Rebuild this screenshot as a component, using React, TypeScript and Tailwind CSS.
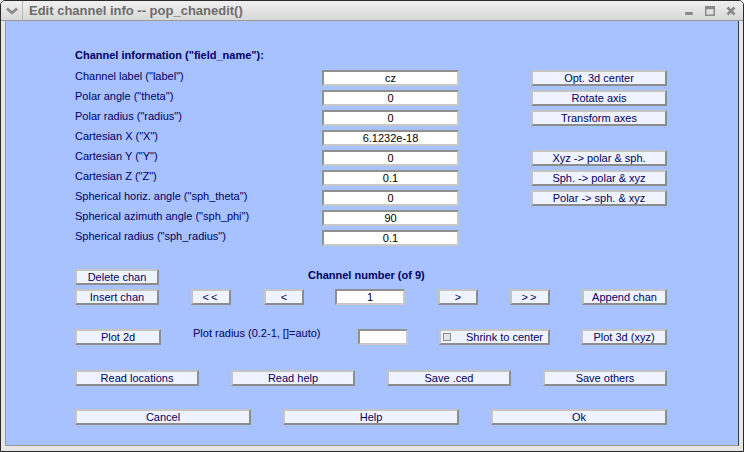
import React from "react";

/* ---------- SHARED STYLES ---------- */
const btn =
  "h-[16px] flex items-center justify-center bg-[#eef3ff] border-2 border-t-[#c4c4c4] border-l-[#c4c4c4] border-b-[#8c8c8c] border-r-[#8c8c8c] text-[11px] leading-none text-[#000066] shrink-0";
const edit =
  "h-[16px] flex items-center justify-center bg-white border-2 border-t-[#909090] border-l-[#909090] border-b-[#c8c8c8] border-r-[#c8c8c8] text-[11px] leading-none text-black shrink-0";

/* ---------- DATA ---------- */
const fields: { label: string; value: string; action?: string }[] = [
  { label: 'Channel label ("label")', value: "cz", action: "Opt. 3d center" },
  { label: 'Polar angle ("theta")', value: "0", action: "Rotate axis" },
  { label: 'Polar radius ("radius")', value: "0", action: "Transform axes" },
  { label: 'Cartesian X ("X")', value: "6.1232e-18" },
  { label: 'Cartesian Y ("Y")', value: "0", action: "Xyz -> polar & sph." },
  { label: 'Cartesian Z ("Z")', value: "0.1", action: "Sph. -> polar & xyz" },
  { label: 'Spherical horiz. angle ("sph_theta")', value: "0", action: "Polar -> sph. & xyz" },
  { label: 'Spherical azimuth angle ("sph_phi")', value: "90" },
  { label: 'Spherical radius ("sph_radius")', value: "0.1" },
];

/* ---------- TITLE BAR ---------- */
function TitleBar() {
  return (
    <div className="h-[20px] flex items-center bg-gradient-to-b from-[#f0f0f0] to-[#d8d8d8] border-b border-[#9a9a9a] rounded-t-[4px] shrink-0">
      <div className="w-[22px] h-full flex items-center justify-center border-r border-[#b8b8b8]">
        <svg viewBox="0 0 12 8" className="w-[12px] h-[8px]">
          <path d="M1 1.5 L6 6 L11 1.5" fill="none" stroke="#8a8a8a" strokeWidth="2.6" />
        </svg>
      </div>
      <span className="ml-[6px] text-[13px] font-bold text-[#6c6c6c] font-['Liberation_Sans',sans-serif]">
        Edit channel info -- pop_chanedit()
      </span>
      <div className="ml-auto flex items-center gap-[11px] mr-[7px]">
        <svg viewBox="0 0 10 10" className="w-[10px] h-[10px]">
          <rect x="1" y="6" width="8" height="3" rx="1.2" fill="#8a8a8a" />
        </svg>
        <svg viewBox="0 0 10 10" className="w-[10px] h-[10px]">
          <rect x="0.75" y="0.75" width="8.5" height="8.5" fill="none" stroke="#8a8a8a" strokeWidth="1.5" />
          <rect x="0.75" y="0.75" width="8.5" height="2.5" fill="#8a8a8a" />
        </svg>
        <svg viewBox="0 0 10 10" className="w-[10px] h-[10px]">
          <path d="M1.5 1.5 L8.5 8.5 M8.5 1.5 L1.5 8.5" stroke="#8a8a8a" strokeWidth="2.8" />
        </svg>
      </div>
    </div>
  );
}

export default function App() {
  return (
    <div className="w-[744px] h-[452px] flex flex-col bg-[#e6e6e6] border border-[#2a2a2a] rounded-t-[5px] overflow-hidden font-['Liberation_Sans',Arial,sans-serif]">
      <TitleBar />

      {/* FRAME */}
      <div className="flex-1 flex px-[4px] pb-[5px]">
        <div className="flex-1 bg-[#a8c2ff] border-l border-[#9a9a9a] border-r border-r-[#3a3a3a] border-b border-b-[#9a9a9a] pl-[69px] pt-[26px]">

          {/* HEADER */}
          <div className="h-[16px] flex items-center text-[11px] font-bold text-[#000066]">
            Channel information ("field_name"):
          </div>

          {/* FIELD ROWS */}
          <div className="mt-[7px] flex flex-col gap-[4px]">
            {fields.map((f, i) => (
              <div key={i} className="flex items-center h-[16px]">
                <div className="w-[247px] pb-[4px] text-[11px] text-[#000066] leading-none whitespace-nowrap">
                  {f.label}
                </div>
                <div className={`${edit} w-[137px]`}>{f.value}</div>
                {f.action && <div className={`${btn} w-[136px] ml-[72px]`}>{f.action}</div>}
              </div>
            ))}
          </div>

          {/* CHANNEL NAV */}
          <div className="mt-[23px] flex items-center h-[16px]">
            <div className={`${btn} w-[84px]`}>Delete chan</div>
            <div className="ml-[149px] text-[11px] font-bold text-[#000066] pb-[4px]">Channel number (of 9)</div>
          </div>
          <div className="mt-[4px] flex items-center h-[16px]">
            <div className={`${btn} w-[84px]`}>Insert chan</div>
            <div className={`${btn} w-[40px] ml-[32px] tracking-[2px]`}>&lt;&lt;</div>
            <div className={`${btn} w-[40px] ml-[33px]`}>&lt;</div>
            <div className={`${edit} w-[70px] ml-[31px]`}>1</div>
            <div className={`${btn} w-[40px] ml-[33px]`}>&gt;</div>
            <div className={`${btn} w-[40px] ml-[32px] tracking-[2px]`}>&gt;&gt;</div>
            <div className={`${btn} w-[85px] ml-[32px]`}>Append chan</div>
          </div>

          {/* PLOT ROW */}
          <div className="mt-[24px] flex items-center h-[16px]">
            <div className={`${btn} w-[86px]`}>Plot 2d</div>
            <div className="w-[165px] ml-[32px] pb-[7px] text-[11px] text-[#000066] leading-none">
              Plot radius (0.2-1, []=auto)
            </div>
            <div className={`${edit} w-[50px]`}></div>
            <div className={`${btn} w-[111px] ml-[31px] !justify-start`}>
              <span className="ml-[2px] w-[8px] h-[8px] bg-[#e4e4e4] border border-t-[#8c8c8c] border-l-[#8c8c8c] border-b-[#8c8c8c] border-r-[#8c8c8c]" />
              <span className="ml-[15px]">Shrink to center</span>
            </div>
            <div className={`${btn} w-[86px] ml-[31px]`}>Plot 3d (xyz)</div>
          </div>

          {/* FILE ROW */}
          <div className="mt-[25px] flex items-center gap-[32px]">
            <div className={`${btn} w-[124px]`}>Read locations</div>
            <div className={`${btn} w-[124px]`}>Read help</div>
            <div className={`${btn} w-[124px]`}>Save .ced</div>
            <div className={`${btn} w-[124px]`}>Save others</div>
          </div>

          {/* OK ROW */}
          <div className="mt-[23px] flex items-center gap-[32px]">
            <div className={`${btn} w-[176px]`}>Cancel</div>
            <div className={`${btn} w-[176px]`}>Help</div>
            <div className={`${btn} w-[176px]`}>Ok</div>
          </div>
        </div>
      </div>
    </div>
  );
}
